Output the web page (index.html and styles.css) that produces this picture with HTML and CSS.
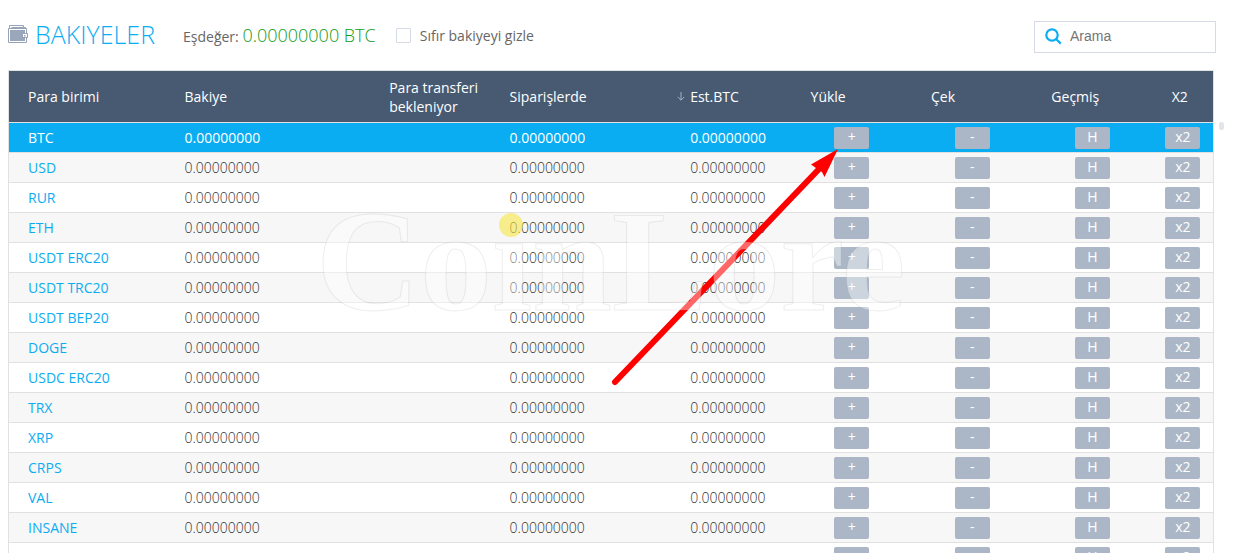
FILE: index.html
```
<!DOCTYPE html>
<html lang="tr">
<head>
<meta charset="utf-8">
<title>Bakiyeler</title>
<link rel="stylesheet" href="styles.css">
</head>
<body>
<main class="page">
  <header class="bar">
    <svg class="wallet" width="20" height="20" viewBox="0 0 20 20" fill="none" stroke="#96a3b8">
      <path d="M1.500 4.500V1.500H15.500V3.500M3.500 3.500H17.500V6"/>
      <path d="M.5 4.500H18.500V18.500H.5Z" fill="#fff"/>
      <path d="M2 6H17V17H2Z" fill="#9aa6ba" stroke="none"/>
      <path d="M14.500 9.500H19.500V13.500H14.500Z" fill="#fff"/>
      <path d="M16 11H17.500V12.500H16Z" fill="#9aa6ba" stroke="none"/>
    </svg>
    <h1 class="title">BAKIYELER</h1>
    <p class="total">Eşdeğer: <span class="total-value">0.00000000 BTC</span></p>
    <label class="hide-zero"><input class="check" type="checkbox">Sıfır bakiyeyi gizle</label>
    <label class="search">
      <svg width="17" height="17" viewBox="0 0 17 17" fill="none" stroke="#0badf2" stroke-width="2.200"><circle cx="7" cy="7" r="5.700"/><path d="M11 11L15.800 15.600"/></svg>
      <input class="search-input" type="search" placeholder="Arama" aria-label="Arama">
    </label>
  </header>
  <div class="list">
    <table class="balances">
      <colgroup><col class="c13"><col class="c17"><col class="c10"><col class="c15"><col class="c10"><col class="c10"><col class="c10"><col class="c10"><col class="c5"></colgroup>
      <thead>
        <tr><th>Para birimi</th><th>Bakiye</th><th>Para transferi bekleniyor</th><th>Siparişlerde</th><th class="sorted"><span class="sort"><svg width="8" height="9" viewBox="0 0 8 9" fill="none" stroke="#9fb0c3"><path d="M4 0V8M.8 5L4 8.200L7.200 5"/></svg>Est.BTC</span></th><th>Yükle</th><th>Çek</th><th>Geçmiş</th><th>X2</th></tr>
      </thead>
      <tbody id="rows"></tbody>
    </table>
    <span class="thumb"></span>
  </div>
  <svg class="overlay" width="1233" height="553" viewBox="0 0 1233 553" aria-hidden="true">
    <circle cx="511" cy="225" r="12" fill="#f8e645" fill-opacity=".6"/>
    <path d="M615 382L820 168" stroke="#f00" stroke-width="6" stroke-linecap="round"/>
    <path d="M838 149L811 164.500L816 168L822 172L824.500 177Z" fill="#f00"/>
    <text class="watermark" x="316" y="310">CoınLore</text>
  </svg>
</main>
<script src="rows.js"></script>
</body>
</html>
```
FILE: styles.css
```
* { box-sizing: border-box; }
body { margin: 0; background: #fff; color: #666; font: 400 14px/19px "Open Sans", sans-serif; }
.page { position: relative; height: 100vh; overflow: hidden; padding: 0 17px 0 8px; }
.bar { display: flex; align-items: center; height: 70px; padding-top: 3px; }
.wallet { flex: none; margin-top: -5px; }
.title { margin: 0 28px 0 7px; color: #0badf2; font-size: 25px; font-weight: 300; line-height: 32px; padding-bottom: 5px; }
.total { margin: 0 20px 0 0; padding-bottom: 2px; white-space: nowrap; }
.total-value { color: #109c20; font-size: 18px; font-weight: 300; }
.hide-zero { display: flex; align-items: center; gap: 9px; padding-bottom: 2px; white-space: nowrap; }
.check { appearance: none; width: 15px; height: 15px; margin: 0; border: 1px solid #d5dae4; border-radius: 1px; background: #fff; }
.search { display: flex; align-items: center; gap: 8px; width: 182px; height: 32px; margin-left: auto; padding: 0 10px; border: 1px solid #d5dae4; }
.search svg { flex: none; }
.search-input { min-width: 0; width: 100%; padding: 0 0 2px; border: 0; outline: 0; background: none; color: #757575; font: 14px "Liberation Sans", sans-serif; }
.list { display: flex; align-items: flex-start; gap: 5px; margin-right: -8px; }
.balances { flex: 1; table-layout: fixed; border: 1px solid #e1e1e1; border-spacing: 0; }
.c5 { width: 5%; }
.c10 { width: 10%; }
.c13 { width: 13%; }
.c15 { width: 15%; }
.c17 { width: 17%; }
th { height: 52px; padding: 0 0 0 19px; border-bottom: 1px solid #e1e1e1; background: #475a72; color: #fff; font-weight: 400; text-align: left; }
.sorted { padding-left: 6px; }
.sort { display: flex; align-items: center; gap: 5px; }
td { height: 30px; padding: 0 0 0 19px; border-bottom: 1px solid #e1e1e1; color: #333; font-weight: 300; white-space: nowrap; }
tbody tr:nth-child(even) { background: #f7f7f7; }
tbody .active { background: #0badf2; }
.active td { color: #fff; font-weight: 400; }
.coin { color: #0badf2; font-weight: 400; text-decoration: none; }
.active .coin { color: #fff; }
.action { padding: 0; text-align: center; }
.btn { display: block; width: 35px; height: 22px; margin: 0 auto; padding: 0 0 2px; border: 0; border-radius: 2px; background: #abb7c6; color: #fff; font: 400 14px/20px "Open Sans", sans-serif; }
.thumb { width: 5px; height: 8px; margin-top: 52px; border-radius: 2px; background: #e1e6ea; }
.overlay { position: absolute; left: 0; top: 0; pointer-events: none; }
.watermark { font: bold 144px "Liberation Serif", serif; fill: #fff; fill-opacity: .4; stroke: #999; stroke-opacity: .17; }
```
FILE: rows.js
```
const coins = ["BTC", "USD", "RUR", "ETH", "USDT ERC20", "USDT TRC20", "USDT BEP20", "DOGE", "USDC ERC20", "TRX", "XRP", "CRPS", "VAL", "INSANE"];
const amount = "0.00000000";
const actions = ["+", "-", "H", "x2"];
const buttons = actions.map(a => `<td class="action"><button class="btn" type="button">${a}</button></td>`).join("");
const rows = coins.map((coin, i) => `
  <tr class="${i === 0 ? "active" : ""}">
    <td><a class="coin" href="#">${coin}</a></td><td>${amount}</td><td></td><td>${amount}</td><td>${amount}</td>${buttons}
  </tr>`);
rows.push(`<tr><td></td><td></td><td></td><td></td><td></td>${buttons}</tr>`);
document.getElementById("rows").innerHTML = rows.join("");
```
